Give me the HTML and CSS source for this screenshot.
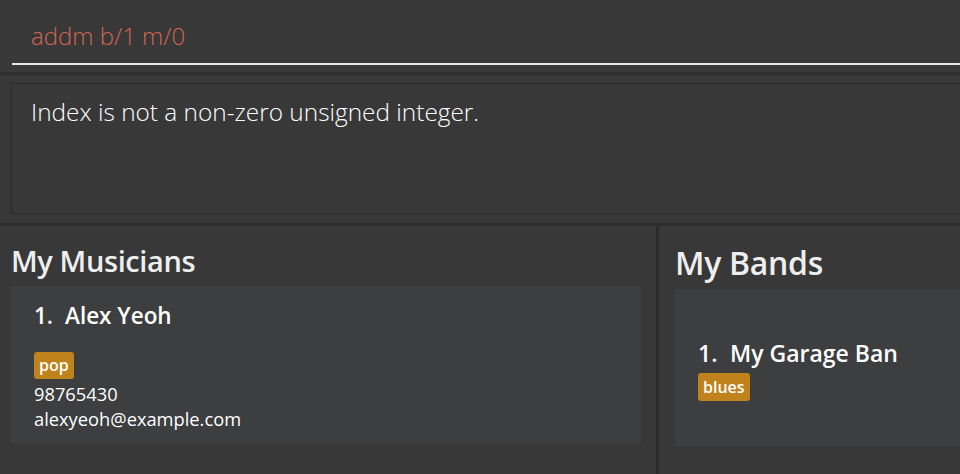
FILE: index.html
```html
<!DOCTYPE html>
<html>
<head>
<meta charset="utf-8">
<link rel="stylesheet" href="styles.css">
</head>
<body>
<div class="app">
  <div class="command-pane">
    <div class="command-field">addm b/1 m/0</div>
  </div>
  <div class="hdivider"></div>
  <div class="result-pane">
    <div class="result-box">Index is not a non-zero unsigned integer.</div>
  </div>
  <div class="hdivider"></div>
  <div class="lists">
    <section class="panel panel-musicians">
      <h2 class="panel-title musicians-title">My Musicians</h2>
      <div class="card musician-card">
        <div class="card-name"><span class="idx">1.</span><span>Alex Yeoh</span></div>
        <div class="tags"><span class="tag">pop</span></div>
        <div class="small">98765430</div>
        <div class="small">alexyeoh@example.com</div>
      </div>
    </section>
    <div class="vdivider"></div>
    <section class="panel panel-bands">
      <h2 class="panel-title bands-title">My Bands</h2>
      <div class="card band-card">
        <div class="card-name band-name"><span class="idx band-idx">1.</span><span>My Garage Ban</span></div>
        <div class="tags band-tags"><span class="tag band-tag">blues</span></div>
      </div>
    </section>
  </div>
</div>
</body>
</html>
```

FILE: styles.css
```css
* { box-sizing: border-box; }
html, body {
  margin: 0;
  padding: 0;
  width: 960px;
  height: 474px;
  overflow: hidden;
  background: #383838;
  font-family: "Open Sans", "Noto Sans", sans-serif;
}
.app {
  display: flex;
  flex-direction: column;
  height: 474px;
}
.command-pane {
  height: 72px;
  padding-left: 12px;
}
.command-field {
  height: 65px;
  padding: 20px 0 0 19px;
  font-size: 24px;
  line-height: 32px;
  font-weight: 300;
  color: #d06651;
  border-bottom: 2px solid #e8e8e8;
  white-space: nowrap;
}
.hdivider {
  height: 3px;
  background: #2e2e2e;
  flex: none;
}
.result-pane {
  height: 148px;
  padding: 8px 0 9px 11px;
}
.result-box {
  height: 131px;
  border: 1px solid #2b2b2b;
  border-right: none;
  padding: 11px 0 0 19px;
  font-size: 24.4px;
  line-height: 34px;
  font-weight: 300;
  color: #ffffff;
  white-space: nowrap;
}
.lists {
  flex: 1;
  display: flex;
}
.panel {
  padding-top: 17px;
  overflow: hidden;
}
.panel-musicians {
  width: 656px;
  padding-left: 11px;
  padding-right: 15px;
}
.vdivider {
  width: 3px;
  background: #2b2b2b;
  flex: none;
}
.panel-bands {
  flex: 1;
  padding-left: 16px;
}
.panel-title {
  margin: 0;
  color: #eeeeee;
  font-weight: 600;
  white-space: nowrap;
}
.musicians-title {
  font-size: 29px;
  letter-spacing: -0.4px;
  line-height: 36px;
  margin-bottom: 7px;
}
.bands-title {
  font-size: 32px;
  letter-spacing: -0.3px;
  line-height: 40px;
  margin-bottom: 6px;
}
.card {
  background: #3c3e3f;
  height: 157px;
  padding-left: 23px;
  color: #ffffff;
}
.musician-card { padding-top: 16px; }
.band-card {
  padding-top: 49px;
  width: 320px;
}
.card-name {
  font-size: 22.5px;
  line-height: 28px;
  font-weight: 600;
  white-space: nowrap;
  display: flex;
}
.idx { width: 31px; flex: none; }
.band-name {
  font-size: 23px;
  line-height: 30px;
}
.band-idx { width: 32px; }
.tags {
  display: flex;
  margin-top: 22px;
  height: 27px;
}
.band-tags {
  margin-top: 5px;
  height: 28px;
}
.tag {
  background: #c0821a;
  color: #ffffff;
  font-weight: 600;
  font-size: 16px;
  line-height: 27px;
  padding: 0 5px;
  border-radius: 3px;
}
.band-tag {
  font-size: 16px;
  line-height: 28px;
}
.small {
  font-size: 18.3px;
  line-height: 25px;
  color: #ffffff;
}
.tags + .small { margin-top: 2px; }
```
